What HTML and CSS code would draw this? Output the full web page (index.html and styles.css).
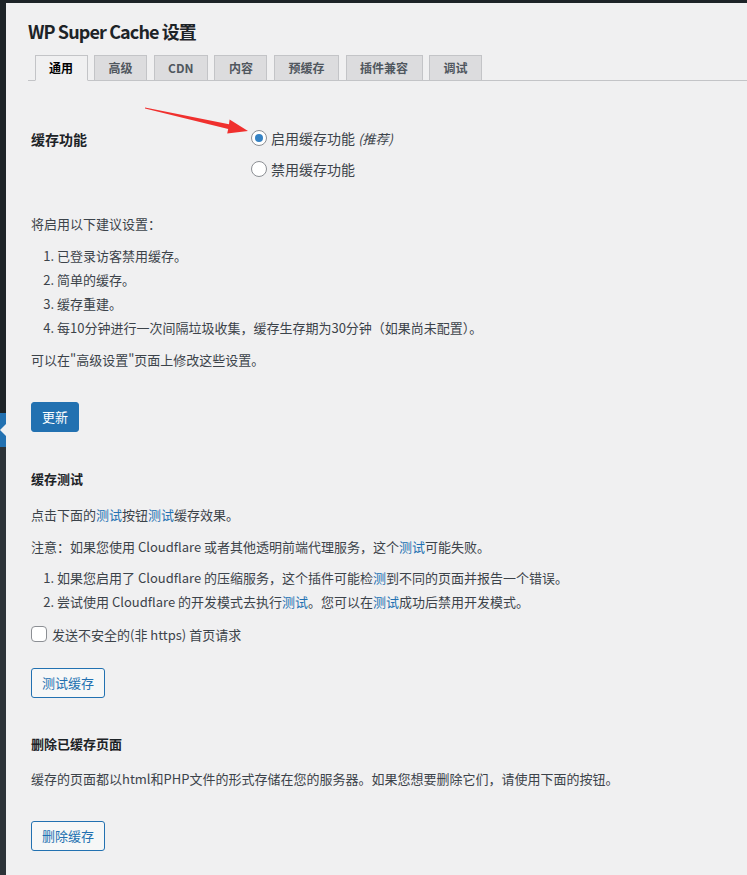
FILE: index.html
```html
<!DOCTYPE html>
<html lang="zh-CN">

<head>
    <meta charset="UTF-8">
    <meta name="viewport" content="width=device-width, initial-scale=1.0">
    <title>WP Super Cache 设置</title>

    <link rel="stylesheet" href="styles.css">
</head>

<body>

    <div id="topbar"></div>

    <div id="admin">
        <div id="adminmenu">
            <div class="menu-top"></div>
            <div class="menu-current"></div>
            <div class="menu-sub"></div>
        </div>

        <div id="wpcontent">
            <div class="wrap">
                <h1>WP Super Cache 设置</h1>

                <nav class="nav-tab-wrapper">
                    <a class="nav-tab nav-tab-active">通用</a>
                    <a class="nav-tab">高级</a>
                    <a class="nav-tab">CDN</a>
                    <a class="nav-tab">内容</a>
                    <a class="nav-tab">预缓存</a>
                    <a class="nav-tab">插件兼容</a>
                    <a class="nav-tab">调试</a>
                </nav>

                <div class="settings">
                    <div class="form-row">
                        <div class="form-label">缓存功能</div>
                        <div class="radio-list">
                            <label class="radio"><input type="radio" name="caching" checked>启用缓存功能 <em>(推荐)</em></label>
                            <label class="radio"><input type="radio" name="caching">禁用缓存功能</label>
                        </div>
                    </div>

                    <p class="intro">将启用以下建议设置：</p>
                    <ol class="steps">
                        <li>已登录访客禁用缓存。</li>
                        <li>简单的缓存。</li>
                        <li>缓存重建。</li>
                        <li>每10分钟进行一次间隔垃圾收集，缓存生存期为30分钟（如果尚未配置）。</li>
                    </ol>
                    <p class="note">可以在"高级设置"页面上修改这些设置。</p>

                    <div class="btn-row update-row">
                        <button class="button button-primary">更新</button>
                    </div>

                    <h3 class="section-title test-title">缓存测试</h3>
                    <p class="test-text">点击下面的<a>测试</a>按钮<a>测试</a>缓存效果。</p>
                    <p class="warn-text">注意：如果您使用 Cloudflare 或者其他透明前端代理服务，这个<a>测试</a>可能失败。</p>
                    <ol class="steps cf-steps">
                        <li>如果您启用了 Cloudflare 的压缩服务，这个插件可能检<a>测</a>到不同的页面并报告一个错误。</li>
                        <li>尝试使用 Cloudflare 的开发模式去执行<a>测试</a>。您可以在<a>测试</a>成功后禁用开发模式。</li>
                    </ol>
                    <label class="checkbox"><input type="checkbox"> 发送不安全的(非 https) 首页请求</label>

                    <div class="btn-row test-row">
                        <button class="button">测试缓存</button>
                    </div>

                    <h3 class="section-title delete-title">删除已缓存页面</h3>
                    <p class="delete-text">缓存的页面都以html和PHP文件的形式存储在您的服务器。如果您想要删除它们，请使用下面的按钮。</p>

                    <div class="btn-row delete-row">
                        <button class="button">删除缓存</button>
                    </div>
                </div>
            </div>

            <!-- screenshot annotation arrow -->
            <svg class="pointer" width="120" height="40" viewBox="140 100 120 40">
                <polygon points="145,107.6 229,124.3 229.6,119.6 248,131 227.2,133.6 228.2,128.9 145,108.6" fill="#f0302e" />
            </svg>
        </div>
    </div>

</body>

</html>
```

FILE: styles.css
```css
body {
    margin: 0;
    background: #f0f0f1;
    color: #3c434a;
    font-family: "Noto Sans CJK SC", sans-serif;
    font-size: 13px;
}

#topbar {
    height: 3px;
    background: #1d2327;
}

#admin {
    display: flex;
    min-height: 872px;
}

#adminmenu {
    width: 6px;
    flex-shrink: 0;
    display: flex;
    flex-direction: column;
    overflow: hidden;
}

.menu-top {
    height: 410px;
    background: #1d2327;
}

.menu-current {
    height: 34px;
    background: #2271b1;
    position: relative;
}

.menu-current::after {
    content: "";
    position: absolute;
    right: -2px;
    top: 9px;
    border: 8px solid transparent;
    border-right-color: #f0f0f1;
    border-left: 0;
}

.menu-sub {
    flex: 1;
    background: #2c3338;
}

#wpcontent {
    flex: 1;
    padding-left: 22px;
    position: relative;
}

.wrap h1 {
    margin: 16px 0 0;
    font-size: 18px;
    line-height: 24px;
    font-weight: 600;
    letter-spacing: -0.9px;
    color: #1d2327;
}

.nav-tab-wrapper {
    margin-top: 12px;
    display: flex;
    border-bottom: 1px solid #c3c4c7;
}

.nav-tab {
    margin-left: 6.5px;
    margin-bottom: -1px;
    padding: 0 13.5px;
    border: 1px solid #c3c4c7;
    background: #dcdcde;
    color: #50575e;
    font-size: 12px;
    font-weight: 600;
    line-height: 24px;
}

.nav-tab-active {
    background: #f0f0f1;
    border-bottom-color: #f0f0f1;
    color: #000;
}

.settings {
    display: flex;
    flex-direction: column;
    align-items: flex-start;
    padding-left: 3px;
}

.settings p {
    margin: 0;
    line-height: 18px;
}

.settings a {
    color: #2271b1;
}

.form-row {
    display: grid;
    grid-template-columns: 220px 1fr;
    margin-top: 45px;
}

.form-label {
    padding-top: 1px;
    font-size: 14px;
    font-weight: 600;
    line-height: 24px;
    color: #1d2327;
}

.radio-list {
    display: flex;
    flex-direction: column;
    gap: 7px;
}

.radio {
    display: flex;
    align-items: center;
    height: 24px;
    font-size: 14px;
    white-space: pre;
}

.radio input,
.checkbox input {
    appearance: none;
    width: 16px;
    height: 16px;
    margin: 0 4px 0 0;
    border: 1px solid #8c8f94;
    background: #fff;
    box-sizing: border-box;
}

.radio input {
    border-radius: 50%;
    position: relative;
}

.radio input:checked::before {
    content: "";
    position: absolute;
    left: 3px;
    top: 3px;
    width: 8px;
    height: 8px;
    border-radius: 50%;
    background: #3582c4;
}

.radio em {
    font-size: 13px;
}

.intro {
    margin-top: 34px !important;
}

.steps {
    margin: 14px 0 0;
    padding-left: 26px;
}

.steps li {
    line-height: 18px;
    margin-bottom: 6px;
}

.note {
    margin-top: 8px !important;
}

.button {
    height: 30px;
    padding: 0 10px;
    border: 1px solid #2271b1;
    border-radius: 3px;
    background: #f6f7f7;
    color: #2271b1;
    font-family: inherit;
    font-size: 13px;
    line-height: 28px;
}

.button-primary {
    background: #2271b1;
    color: #fff;
}

.update-row {
    margin-top: 33px;
}

.section-title {
    margin: 0;
    font-size: 13px;
    line-height: 20px;
    font-weight: 600;
    color: #1d2327;
}

.test-title {
    margin-top: 37px;
}

.test-text {
    margin-top: 17px !important;
}

.warn-text {
    margin-top: 14px !important;
}

.cf-steps {
    margin-top: 13px;
}

.checkbox {
    display: flex;
    align-items: center;
    height: 20px;
    margin-top: 7px;
}

.checkbox input {
    border-radius: 4px;
    margin-right: 5px;
}

.test-row {
    margin-top: 24px;
}

.delete-title {
    margin-top: 36px;
}

.delete-text {
    margin-top: 16px !important;
}

.delete-row {
    margin-top: 33px;
}

.pointer {
    position: absolute;
    left: 134px;
    top: 97px;
}
```
